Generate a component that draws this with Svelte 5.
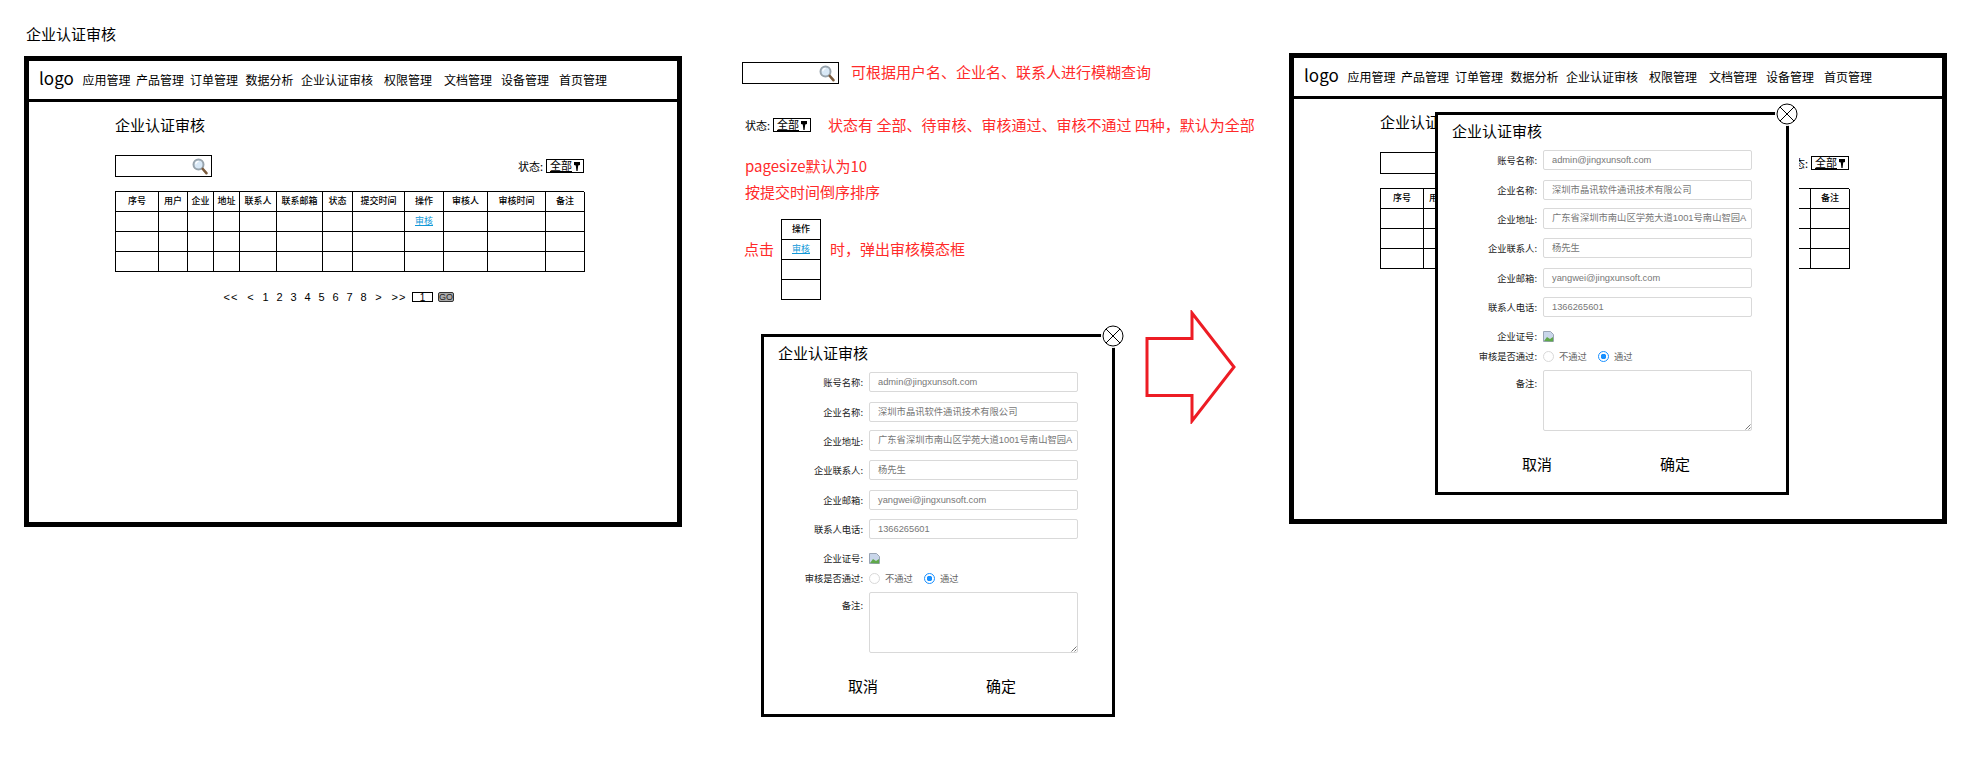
<script>
  const nav = [
    { t: '应用管理', x: 0 },
    { t: '产品管理', x: 53.5 },
    { t: '订单管理', x: 107.5 },
    { t: '数据分析', x: 163 },
    { t: '企业认证审核', x: 218.5 },
    { t: '权限管理', x: 301.5 },
    { t: '文档管理', x: 361.5 },
    { t: '设备管理', x: 418.5 },
    { t: '首页管理', x: 476.5 }
  ];
  const cols = [
    ['序号', 43], ['用户', 29], ['企业', 26], ['地址', 26], ['联系人', 37], ['联系邮箱', 46],
    ['状态', 30], ['提交时间', 52], ['操作', 39], ['审核人', 44], ['审核时间', 58], ['备注', 39]
  ];
  // columns that stay readable next to the open modal
  const uncovered = ['序号', '用户', '备注'];
  const gridCols = cols.map((c) => c[1] + 'px').join(' ');
  const pages = [
    ['<<', 20, 2], ['<', 16, 0], ['1', 14, 0], ['2', 14, 0], ['3', 14, 0], ['4', 14, 0], ['5', 14, 0],
    ['6', 14, 0], ['7', 14, 0], ['8', 14, 0], ['>', 16, 0], ['>>', 24, 0]
  ];
  const fields = [
    ['账号名称:', 'admin@jingxunsoft.com', 20, 10],
    ['企业名称:', '深圳市晶讯软件通讯技术有限公司', 20, 8],
    ['企业地址:', '广东省深圳市南山区学苑大道1001号南山智园A', 21, 9],
    ['企业联系人:', '杨先生', 20, 10],
    ['企业邮箱:', 'yangwei@jingxunsoft.com', 20, 9],
    ['联系人电话:', '1366265601', 20, 0]
  ];
</script>

{#snippet magnifier()}
  <svg class="glass" viewBox="0 0 16 17" width="16" height="17">
    <circle cx="6.5" cy="6.5" r="5" fill="#d8e8f6" stroke="#98a4ad" stroke-width="2" />
    <path d="M3.8 6.2a2.800 2.800 0 0 1 2.800-2.800" fill="none" stroke="#fff" stroke-width="1.200" />
    <path d="M10.800 11l3.600 4.200" stroke="#7a5a3c" stroke-width="2.600" stroke-linecap="round" />
  </svg>
{/snippet}

{#snippet searchBox()}
  <div class="search">{@render magnifier()}</div>
{/snippet}

{#snippet statusSelect()}
  <div class="select">
    <span class="select-text">全部</span>
    <svg viewBox="0 0 6 9" width="6" height="9"><path d="M0 0h6v3L4.200 3.600 3.600 9H2.400L1.800 3.600 0 3z" fill="#000" /></svg>
  </div>
{/snippet}

{#snippet frame(covered)}
  <div class="frame-head">
    <span class="logo">logo</span>
    <div class="nav">
      {#each nav as item}
        <span class="nav-item" style="left: {item.x}px">{item.t}</span>
      {/each}
    </div>
  </div>
  <div class="frame-body">
    <h2 class="page-title">企业认证审核</h2>
    <div class="toolbar">
      {@render searchBox()}
      <div class="status"><span>状态:</span>{@render statusSelect()}</div>
    </div>
    <div class="table" style="grid-template-columns: {gridCols}">
      {#each cols as col}
        <div class="cell head">{!covered || uncovered.includes(col[0]) ? col[0] : ''}</div>
      {/each}
      {#each [0, 1, 2] as row}
        {#each cols as col}
          <div class="cell">
            {#if !covered && row === 0 && col[0] === '操作'}<span class="link">审核</span>{/if}
          </div>
        {/each}
      {/each}
    </div>
    {#if !covered}
      <div class="pager">
        {#each pages as p}
          <span class="page" style="width: {p[1]}px; margin-right: {p[2]}px">{p[0]}</span>
        {/each}
        <span class="page-input">1</span>
        <span class="go">GO</span>
      </div>
    {/if}
  </div>
{/snippet}

{#snippet modal()}
  <h3 class="modal-title">企业认证审核</h3>
  <div class="close">
    <svg viewBox="0 0 22 22" width="22" height="22">
      <circle cx="11" cy="11" r="10" fill="#fff" stroke="#000" stroke-width="1" />
      <path d="M4 4l14 14M18 4L4 18" stroke="#000" stroke-width="1" />
    </svg>
  </div>
  <div class="form">
    {#each fields as f}
      <div class="row" style="margin-bottom: {f[3]}px">
        <span class="label">{f[0]}</span>
        <div class="input" style="height: {f[2]}px">{f[1]}</div>
      </div>
    {/each}
    <div class="row cert">
      <span class="label">企业证号:</span>
      <svg viewBox="0 0 11 11" width="11" height="11">
        <path d="M0.5 0.5h7l3 3v7h-10z" fill="#c9d6ea" stroke="#9aa5b5" stroke-width="1" />
        <path d="M1 10l3-4 3 2 3-2v4.500z" fill="#5fa84a" />
      </svg>
    </div>
    <div class="row verdict">
      <span class="label">审核是否通过:</span>
      <span class="radio"></span><span class="radio-text">不通过</span>
      <span class="radio on"></span><span class="radio-text">通过</span>
    </div>
    <div class="row note">
      <span class="label">备注:</span>
      <div class="textarea">
        <svg class="grip" viewBox="0 0 6 6" width="6" height="6"><path d="M0.500 5.500l5-5M3.500 5.500l2-2" stroke="#555" stroke-width="0.8" /></svg>
      </div>
    </div>
  </div>
  <div class="actions"><span>取消</span><span>确定</span></div>
{/snippet}

<div class="canvas">
  <div class="doc-title">企业认证审核</div>

  <section class="frame left">{@render frame(false)}</section>

  <div class="note-search">
    {@render searchBox()}
    <span class="red">可根据用户名、企业名、联系人进行模糊查询</span>
  </div>
  <div class="note-status">
    <div class="status"><span>状态:</span>{@render statusSelect()}</div>
    <span class="red">状态有 全部、待审核、审核通过、审核不通过 四种&#xFF0C;默认为全部</span>
  </div>
  <div class="note-page">
    <span class="red">pagesize默认为10</span>
    <span class="red">按提交时间倒序排序</span>
  </div>
  <div class="note-click">
    <span class="red">点击</span>
    <div class="mini">
      <div class="cell head">操作</div>
      <div class="cell"><span class="link">审核</span></div>
      <div class="cell"></div>
      <div class="cell"></div>
    </div>
    <span class="red">时&#xFF0C;弹出审核模态框</span>
  </div>

  <section class="modal mid">{@render modal()}</section>

  <svg class="arrow" viewBox="0 0 92 114" width="92" height="114">
    <path d="M2 28.500h45V3l42 54-42 54V85.500H2z" fill="#fff" stroke="#ed1c24" stroke-width="3" />
  </svg>

  <section class="frame right">
    {@render frame(true)}
    <section class="modal over">{@render modal()}</section>
  </section>
</div>

<style>
  :global(body) {
    margin: 0;
    background: #fff;
  }

  .canvas {
    position: relative;
    width: 1986px;
    height: 762px;
    overflow: hidden;
    background: #fff;
    color: #000;
    font-family: "Noto Sans CJK SC", "Liberation Sans", sans-serif;
    font-size: 12px;
  }

  .doc-title {
    position: absolute;
    left: 26px;
    top: 23px;
    font-size: 15px;
    line-height: 22px;
  }

  /* frames sit on a free canvas, their content is flow */
  .frame {
    position: absolute;
    box-sizing: border-box;
    width: 658px;
    height: 471px;
    border: 5px solid #000;
  }
  .frame.left {
    left: 24px;
    top: 56px;
  }
  .frame.right {
    left: 1289px;
    top: 53px;
  }

  .frame-head {
    display: flex;
    align-items: center;
    box-sizing: border-box;
    height: 41px;
    padding-left: 10px;
    border-bottom: 3px solid #000;
  }
  .logo {
    width: 43.500px;
    font-size: 17px;
    line-height: 20px;
    margin-top: -5px;
  }
  .nav {
    position: relative;
    flex: 1;
    height: 18px;
  }
  .nav-item {
    position: absolute;
    top: 0;
    font-size: 12px;
    line-height: 18px;
    white-space: nowrap;
  }

  .frame-body {
    padding: 12px 0 0 86px;
  }
  .page-title {
    margin: 0;
    font-size: 15px;
    font-weight: 400;
    line-height: 22px;
  }
  .toolbar {
    display: flex;
    align-items: center;
    justify-content: space-between;
    width: 469px;
    margin-top: 19px;
  }

  .search {
    display: flex;
    align-items: center;
    justify-content: flex-end;
    box-sizing: border-box;
    width: 97px;
    height: 22px;
    padding-right: 3px;
    border: 1px solid #000;
  }

  .status {
    display: flex;
    align-items: center;
    gap: 3px;
    font-size: 11px;
    white-space: nowrap;
  }
  .select {
    display: flex;
    align-items: center;
    justify-content: space-between;
    box-sizing: border-box;
    width: 38px;
    height: 14px;
    padding: 0 3px 0 3px;
    border: 1px solid #000;
    font-size: 11px;
    line-height: 12px;
  }
  .select-text {
    border-bottom: 1px solid #000;
    height: 11px;
    line-height: 11px;
  }

  .table {
    display: grid;
    grid-auto-rows: 20px;
    width: 469px;
    margin-top: 14px;
    border-top: 1px solid #000;
    border-left: 1px solid #000;
    box-sizing: border-box;
  }
  .cell {
    display: flex;
    align-items: center;
    justify-content: center;
    box-sizing: border-box;
    border-right: 1px solid #000;
    border-bottom: 1px solid #000;
    font-size: 9px;
    line-height: 12px;
    white-space: nowrap;
    min-width: 0;
    padding-bottom: 2px;
  }
  .cell.head {
    font-weight: 500;
  }
  .link {
    color: #1098d8;
    text-decoration: underline;
  }

  .pager {
    display: flex;
    align-items: center;
    height: 12px;
    margin: 19px 0 0 106px;
    font-family: "Liberation Sans", sans-serif;
    font-size: 11px;
  }
  .page {
    flex: none;
    text-align: center;
    letter-spacing: 1px;
    line-height: 12px;
  }
  .page-input {
    box-sizing: border-box;
    width: 21px;
    height: 10px;
    margin-left: 1px;
    border: 1px solid #000;
    font-size: 10px;
    text-align: center;
    line-height: 9px;
  }
  .go {
    box-sizing: border-box;
    width: 16px;
    height: 10px;
    margin-left: 5px;
    border: 1px solid #333;
    border-radius: 2px;
    background: #aaa;
    color: #222;
    font-size: 9px;
    line-height: 8px;
    text-align: center;
  }

  .red {
    color: #ff2a2a;
    font-size: 15px;
    line-height: 22px;
    white-space: nowrap;
  }

  .note-search,
  .note-status,
  .note-page,
  .note-click {
    position: absolute;
    display: flex;
  }
  .note-search {
    left: 742px;
    top: 62px;
    align-items: center;
    gap: 12px;
  }
  .note-search .red {
    margin-top: -2px;
  }
  .note-status {
    left: 745px;
    top: 114px;
    align-items: center;
    gap: 17px;
  }
  .note-page {
    left: 745px;
    top: 155px;
    flex-direction: column;
    gap: 4px;
  }
  .note-click {
    left: 744px;
    top: 219px;
    align-items: flex-start;
  }
  .note-click .red {
    margin-top: 19px;
  }
  .note-click .red:first-child {
    width: 37px;
  }
  .note-click .red:last-child {
    margin-left: 9px;
  }

  .mini {
    display: grid;
    grid-auto-rows: 20px;
    box-sizing: border-box;
    width: 40px;
    border-top: 1px solid #000;
    border-left: 1px solid #000;
  }

  .arrow {
    position: absolute;
    left: 1145px;
    top: 310px;
  }

  .modal {
    position: absolute;
    box-sizing: border-box;
    width: 354px;
    height: 383px;
    padding: 6px 0 0 14px;
    border: 3px solid #000;
    background: #fff;
  }
  .modal.mid {
    left: 761px;
    top: 334px;
  }
  /* relative to the padding box of the right frame */
  .modal.over {
    left: 141px;
    top: 54px;
    box-shadow: 10px 0 0 #fff;
  }
  .modal-title {
    margin: 0;
    font-size: 15px;
    font-weight: 400;
    line-height: 20px;
  }
  .close {
    position: absolute;
    right: -12px;
    top: -12px;
    width: 22px;
    height: 22px;
    padding: 1px;
    margin: -1px;
    background: #fff;
    border-radius: 50%;
  }
  .close svg {
    display: block;
  }

  .form {
    margin: 9px 0 0 -14px;
  }
  .row {
    display: flex;
    align-items: center;
    font-size: 9.300px;
  }
  .label {
    flex: none;
    box-sizing: border-box;
    width: 99px;
    text-align: right;
    color: #222;
    line-height: 14px;
    white-space: nowrap;
  }
  .row > :global(svg) {
    margin-left: 6px;
  }
  .input {
    box-sizing: border-box;
    width: 209px;
    margin-left: 6px;
    padding: 0 8px;
    border: 1px solid #d9d9d9;
    border-radius: 2px;
    color: #777;
    font-family: "Liberation Sans", "Noto Sans CJK SC", sans-serif;
    line-height: 18px;
    white-space: nowrap;
    overflow: hidden;
  }
  .row.cert {
    height: 12px;
    margin-top: 13px;
  }
  .row.verdict {
    height: 14px;
    margin-top: 7px;
  }
  .row.note {
    align-items: flex-start;
    margin-top: 7px;
  }
  .row.note .label {
    margin-top: 6px;
  }
  .radio {
    flex: none;
    box-sizing: border-box;
    width: 11px;
    height: 11px;
    margin-left: 6px;
    border: 1px solid #d9d9d9;
    border-radius: 50%;
    background: #fff;
  }
  .radio.on {
    margin-left: 11px;
    border-color: #1890ff;
    background: radial-gradient(circle, #1890ff 0 2.600px, #fff 3px);
  }
  .radio-text {
    margin-left: 5px;
    color: #666;
    white-space: nowrap;
  }
  .textarea {
    position: relative;
    box-sizing: border-box;
    width: 209px;
    height: 61px;
    margin-left: 6px;
    border: 1px solid #d9d9d9;
    border-radius: 2px;
  }
  .grip {
    position: absolute;
    right: 0;
    bottom: 0;
  }

  .actions {
    display: flex;
    gap: 108px;
    margin: 22px 0 0 70px;
    font-size: 15px;
    line-height: 22px;
  }
</style>
